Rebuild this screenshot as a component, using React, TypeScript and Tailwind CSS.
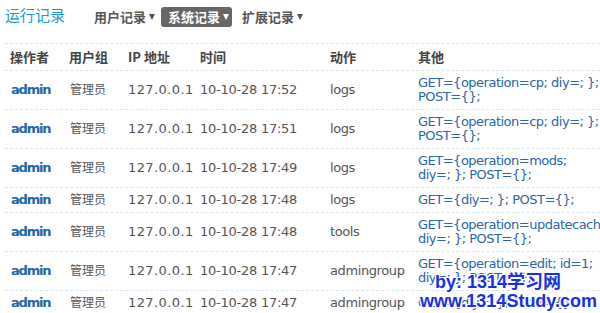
import React from "react";

const rows = [
  { t: "10-10-28 17:52", a: "logs", o: ["GET={operation=cp; diy=; };", "POST={};"] },
  { t: "10-10-28 17:51", a: "logs", o: ["GET={operation=cp; diy=; };", "POST={};"] },
  { t: "10-10-28 17:49", a: "logs", o: ["GET={operation=mods;", "diy=; }; POST={};"] },
  { t: "10-10-28 17:48", a: "logs", o: ["GET={diy=; }; POST={};"] },
  { t: "10-10-28 17:48", a: "tools", o: ["GET={operation=updatecache;", "diy=; }; POST={};"] },
  { t: "10-10-28 17:47", a: "admingroup", o: ["GET={operation=edit; id=1;", "diy=; }; POST={};"] },
  { t: "10-10-28 17:47", a: "admingroup", o: ["GET={diy=; }; POST={};"] },
];

const grid = "grid grid-cols-[59px_59px_72px_130px_88px_260px] items-center";

function Tri({ white }: { white?: boolean }) {
  return (
    <span
      className={
        "ml-[3px] inline-block h-0 w-0 border-x-[3.5px] border-t-[6px] border-x-transparent " +
        (white ? "border-t-white" : "border-t-[#555]")
      }
    />
  );
}

export default function App() {
  return (
    <div className="relative h-[313px] w-[600px] overflow-hidden bg-white font-['DejaVu_Sans','Noto_Sans_CJK_SC',sans-serif]">
      <div className="flex h-[43px] items-start pl-[5px]">
        <div className="mt-[5px] text-[15px] leading-[20px] text-[#1b98d4] font-['Noto_Sans_CJK_SC',sans-serif]">
          运行记录
        </div>
        <div className="ml-[22px] mt-[7px] flex gap-[3px] text-[13px] font-bold leading-[20px] font-['Noto_Sans_CJK_SC',sans-serif]">
          <div className="flex h-[20px] items-center pl-[7px] pr-[3px] text-[#555]">
            用户记录
            <Tri />
          </div>
          <div className="flex h-[20px] items-center rounded-[3px] bg-[#666] pl-[7px] pr-[3px] text-white">
            系统记录
            <Tri white />
          </div>
          <div className="flex h-[20px] items-center pl-[7px] pr-[3px] text-[#555]">
            扩展记录
            <Tri />
          </div>
        </div>
      </div>

      <div className="ml-[5px] w-[700px]">
        <div className={grid + " h-[27px] border-t border-dashed border-[#d9e7f3] text-[13px] font-bold text-[#444] font-['Noto_Sans_CJK_SC',sans-serif]"}>
          <div className="pl-[5px]">操作者</div>
          <div className="pl-[5px]">用户组</div>
          <div className="pl-[5px]">IP 地址</div>
          <div className="pl-[5px]">时间</div>
          <div className="pl-[5px]">动作</div>
          <div className="pl-[5px]">其他</div>
        </div>
        {rows.map((r, i) => (
          <div
            key={i}
            className={grid + " border-t border-dashed border-[#d9e7f3] py-[5px] text-[13px] leading-[14px] text-[#555]"}
          >
            <div className="pl-[6px] font-bold tracking-[-1.2px] text-[#2466a8]">admin</div>
            <div className="pl-[6px] text-[12px]">管理员</div>
            <div className="pl-[5px] tracking-[0.4px]">127.0.0.1</div>
            <div className="pl-[5px] tracking-[-0.25px]">{r.t}</div>
            <div className="pl-[5px] tracking-[-0.4px]">{r.a}</div>
            <div className="whitespace-nowrap pl-[5px] tracking-[-0.5px] text-[#2a65aa]">
              {r.o.map((l, j) => (
                <div key={j}>{l}</div>
              ))}
            </div>
          </div>
        ))}
      </div>

      <div className="absolute left-[420px] top-[273px] text-[18px] font-bold leading-[19px] text-[#1a30e8] font-['Liberation_Sans','Noto_Sans_CJK_SC',sans-serif] [text-shadow:1px_0_0_#fff,-1px_0_0_#fff,0_1px_0_#fff,0_-1px_0_#fff,1px_1px_0_#fff,-1px_-1px_0_#fff,1px_-1px_0_#fff,-1px_1px_0_#fff]">
        <div className="pl-[15px]">by: 1314学习网</div>
        <div>www.1314Study.com</div>
      </div>
    </div>
  );
}
